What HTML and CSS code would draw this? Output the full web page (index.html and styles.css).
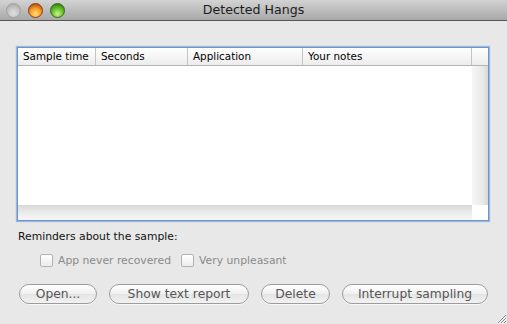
FILE: index.html
```html
<!DOCTYPE html>
<html lang="en">
<head>
    <meta charset="UTF-8">
    <title>Detected Hangs</title>
    <link rel="stylesheet" href="styles.css">
</head>
<body>
<div class="window">
    <div class="titlebar">
        <div class="lights">
            <span class="light gray"></span>
            <span class="light orange"></span>
            <span class="light green"></span>
        </div>
        <div class="title">Detected Hangs</div>
    </div>

    <div class="content">
        <div class="table">
            <div class="thead">
                <div class="th c1">Sample time</div>
                <div class="th c2">Seconds</div>
                <div class="th c3">Application</div>
                <div class="th c4">Your notes</div>
                <div class="th c5"></div>
            </div>
            <div class="tbody">
                <div class="rows"></div>
                <div class="vscroll"></div>
            </div>
            <div class="tfoot">
                <div class="hscroll"></div>
                <div class="corner"></div>
            </div>
        </div>

        <p class="label">Reminders about the sample:</p>

        <div class="checks">
            <label class="check"><span class="box"></span>App never recovered</label>
            <label class="check"><span class="box"></span>Very unpleasant</label>
        </div>

        <div class="buttons">
            <button class="btn b-open">Open...</button>
            <button class="btn b-report">Show text report</button>
            <button class="btn b-delete">Delete</button>
            <button class="btn b-interrupt">Interrupt sampling</button>
        </div>
    </div>

    <svg class="grip" width="12" height="12" viewBox="0 0 12 12">
        <path d="M11 3 L3 11 M11 6 L6 11 M11 9 L9 11" stroke="#8a8a8a" stroke-width="1"/>
        <path d="M11 4 L4 11 M11 7 L7 11 M11 10 L10 11" stroke="#fafafa" stroke-width="1"/>
    </svg>
</div>
</body>
</html>
```

FILE: styles.css
```css
* {
    margin: 0;
    padding: 0;
    box-sizing: border-box;
}

body {
    font-family: "DejaVu Sans", "Liberation Sans", sans-serif;
    background: #e8e8e8;
}

.window {
    width: 507px;
    height: 324px;
    background: #e8e8e8;
    position: relative;
    overflow: hidden;
}

.titlebar {
    height: 21px;
    background: linear-gradient(#d3d3d3, #a8a8a8);
    border-bottom: 1px solid #575757;
    display: flex;
    align-items: center;
    position: relative;
}

.lights {
    display: flex;
    gap: 7px;
    padding-left: 6px;
}

.light {
    width: 15px;
    height: 15px;
    border-radius: 50%;
    display: block;
}

.light.gray {
    background: radial-gradient(circle at 50% 70%, #e2e2e2, #bdbdbd 60%, #9e9e9e);
    border: 1px solid #a0a0a0;
}

.light.orange {
    background: radial-gradient(circle at 50% 75%, #ffe07a, #f7a028 45%, #b0420d 90%);
    border: 1px solid #8a3a10;
}

.light.green {
    background: radial-gradient(circle at 50% 75%, #c8f58a, #6cc230 45%, #2b7a0c 90%);
    border: 1px solid #2f6a14;
}

.title {
    position: absolute;
    left: 0;
    right: 0;
    top: 2px;
    text-align: center;
    font-size: 12.6px;
    color: #1c1c1c;
}

.content {
    padding: 26px 0 0 17px;
}

.table {
    width: 472px;
    height: 174px;
    border: 1px solid #6d93cc;
    box-shadow: 0 0 1px 1px #9db8e0;
    background: #fff;
    display: flex;
    flex-direction: column;
}

.thead {
    display: flex;
    height: 18px;
    background: linear-gradient(#ffffff, #ececec);
    border-bottom: 1px solid #b4b4b4;
}

.th {
    font-size: 10.4px;
    line-height: 17px;
    padding-left: 5px;
    color: #000;
    border-right: 1px solid #c4c4c4;
    white-space: nowrap;
}

.c1 { width: 78px; }
.c2 { width: 92px; }
.c3 { width: 115px; }
.c4 { width: 169px; }
.c5 { flex: 1; border-right: none; }

.tbody {
    flex: 1;
    display: flex;
}

.rows {
    flex: 1;
}

.vscroll {
    width: 16px;
    background: linear-gradient(90deg, #f6f6f6, #e8e8e8 70%, #d8d8d8);
}

.tfoot {
    height: 15px;
    display: flex;
}

.hscroll {
    flex: 1;
    background: linear-gradient(#d8d8d8, #eeeeee 60%, #f6f6f6);
}

.corner {
    width: 16px;
    background: #fff;
}

.label {
    font-size: 10.8px;
    line-height: 14px;
    margin-top: 9px;
    padding-left: 1px;
    color: #111;
}

.checks {
    display: flex;
    gap: 10px;
    padding-left: 23px;
    margin-top: 10px;
}

.check {
    display: flex;
    align-items: center;
    gap: 5px;
    font-size: 10.8px;
    color: #8a8a8a;
}

.box {
    width: 13px;
    height: 13px;
    border: 1px solid #b2b2b2;
    border-radius: 2px;
    background: linear-gradient(#ffffff, #ececec);
    display: block;
}

.buttons {
    display: flex;
    gap: 12px;
    padding-left: 2px;
    margin-top: 17px;
}

.btn {
    height: 20px;
    border: 1px solid #9c9c9c;
    border-radius: 10px;
    background: linear-gradient(#ffffff, #f0f0f0 50%, #e4e4e4 51%, #f2f2f2);
    font-family: inherit;
    font-size: 12.3px;
    color: #565656;
    box-shadow: 0 1px 0 #f8f8f8;
}

.b-open { width: 78px; }
.b-report { width: 140px; }
.b-delete { width: 69px; }
.b-interrupt { width: 146px; }

.grip {
    position: absolute;
    right: 0;
    bottom: 0;
}
```
